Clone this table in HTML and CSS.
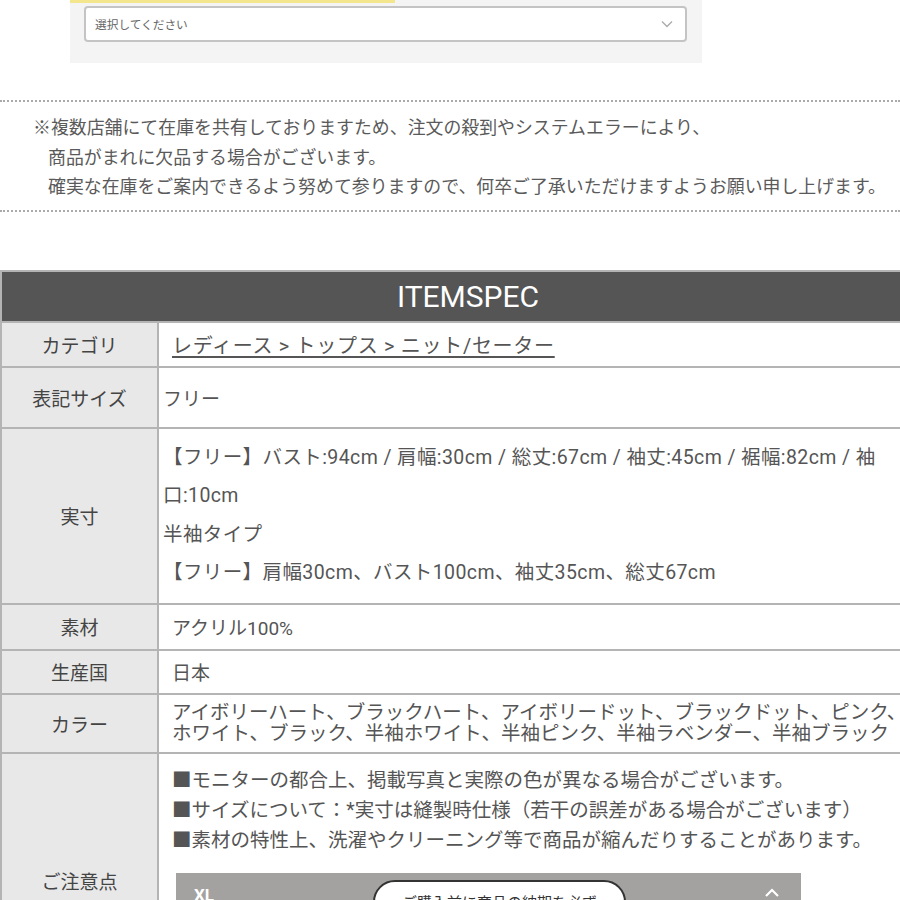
FILE: index.html
```html
<!DOCTYPE html>
<html lang="ja">
<head>
<meta charset="utf-8">
<title>ITEMSPEC</title>
<link rel="stylesheet" href="styles.css">
</head>
<body>
<div class="page">
  <div class="select-panel">
    <div class="yellow-bar"></div>
    <div class="select-box">
      <span class="select-text">選択してください</span>
      <svg class="chev" width="12" height="8" viewBox="0 0 12 8"><path d="M1 1.5 L6 6.5 L11 1.5" fill="none" stroke="#aaa" stroke-width="1.3"/></svg>
    </div>
  </div>

  <div class="notice">
    <div class="n-line">※複数店舗にて在庫を共有しておりますため、注文の殺到やシステムエラーにより、</div>
    <div class="n-line indent">商品がまれに欠品する場合がございます。</div>
    <div class="n-line indent">確実な在庫をご案内できるよう努めて参りますので、何卒ご了承いただけますようお願い申し上げます。</div>
  </div>

  <div class="spec">
    <div class="spec-head">ITEMSPEC</div>
    <div class="row r-cat">
      <div class="label">カテゴリ</div>
      <div class="val pad15"><a class="cat-link" href="#">レディース &gt; トップス &gt; ニット/セーター</a></div>
    </div>
    <div class="row r-size">
      <div class="label">表記サイズ</div>
      <div class="val pad5">フリー</div>
    </div>
    <div class="row r-dim">
      <div class="label">実寸</div>
      <div class="val pad5 dim">
        <div>【フリー】バスト:94cm / 肩幅:30cm / 総丈:67cm / 袖丈:45cm / 裾幅:82cm / 袖</div>
        <div>口:10cm</div>
        <div>半袖タイプ</div>
        <div>【フリー】肩幅30cm、バスト100cm、袖丈35cm、総丈67cm</div>
      </div>
    </div>
    <div class="row r-mat">
      <div class="label">素材</div>
      <div class="val pad15">アクリル100%</div>
    </div>
    <div class="row r-origin">
      <div class="label">生産国</div>
      <div class="val pad15">日本</div>
    </div>
    <div class="row r-color">
      <div class="label">カラー</div>
      <div class="val pad15 colors">
        <div>アイボリーハート、ブラックハート、アイボリードット、ブラックドット、ピンク、</div>
        <div>ホワイト、ブラック、半袖ホワイト、半袖ピンク、半袖ラベンダー、半袖ブラック</div>
      </div>
    </div>
    <div class="row r-note">
      <div class="label">ご注意点</div>
      <div class="val pad15 note">
        <div class="note-lines">
          <div>■モニターの都合上、掲載写真と実際の色が異なる場合がございます。</div>
          <div>■サイズについて：*実寸は縫製時仕様（若干の誤差がある場合がございます）</div>
          <div>■素材の特性上、洗濯やクリーニング等で商品が縮んだりすることがあります。</div>
        </div>
        <div class="shot">
          <span class="shot-xl">XL</span>
          <span class="shot-pill">ご購入前に商品の納期を必ず</span>
          <svg class="shot-up" width="16" height="10" viewBox="0 0 16 10"><path d="M2 9 L8 3 L14 9" fill="none" stroke="#fff" stroke-width="2.2"/></svg>
        </div>
      </div>
    </div>
  </div>
</div>
</body>
</html>
```

FILE: styles.css
```css
html, body {
  margin: 0;
  padding: 0;
  overflow: hidden;
  background: #fff;
}
.page {
  width: 900px;
  font-family: Roboto, "Noto Sans CJK JP", sans-serif;
  color: #555;
}
.select-panel {
  margin-left: 70px;
  width: 632px;
  height: 63px;
  background: #f4f4f4;
  box-sizing: border-box;
}
.yellow-bar {
  width: 325px;
  height: 3px;
  background: #f3e68c;
}
.select-box {
  margin: 3px 15px 0 14px;
  height: 36px;
  box-sizing: border-box;
  border: 2px solid #c4c4c4;
  border-radius: 4px;
  background: #fff;
  display: flex;
  align-items: center;
  justify-content: space-between;
  padding: 0 12px 0 9px;
}
.select-text {
  font-family: "Noto Sans CJK JP", sans-serif;
  font-size: 11.7px;
  color: #666;
  margin-top: -2px;
}
.notice {
  margin-top: 37px;
  border-top: 2px dotted #aaa;
  border-bottom: 2px dotted #aaa;
  padding: 10px 0 9px 33px;
  font-family: "Noto Sans CJK JP", sans-serif;
  font-size: 17.9px;
  line-height: 29.5px;
  color: #5a5a5a;
  white-space: nowrap;
}
.indent {
  margin-left: 15px;
}
.spec {
  margin-top: 58px;
  width: 936px;
  border: 2px solid #b4b4b4;
  border-bottom: 0;
  margin-left: 0;
  box-sizing: border-box;
}
.spec-head {
  height: 49px;
  background: #555;
  color: #fff;
  text-align: center;
  font-family: Roboto, sans-serif;
  font-size: 30px;
  line-height: 49px;
}
.row {
  display: grid;
  grid-template-columns: 157px 1fr;
  border-top: 2px solid #b4b4b4;
  box-sizing: border-box;
}
.label {
  background: #e8e8e8;
  border-right: 2px solid #b4b4b4;
  display: flex;
  align-items: center;
  justify-content: center;
  font-family: "Noto Sans CJK JP", sans-serif;
  font-size: 19px;
  color: #444;
}
.val {
  display: flex;
  flex-direction: column;
  justify-content: center;
  font-size: 19px;
  color: #555;
  white-space: nowrap;
}
.pad15 { padding-left: 13px; }
.pad5 { padding-left: 4px; }
.r-cat { height: 45px; }
.r-size { height: 61px; }
.r-dim { height: 176px; }
.r-mat { height: 46px; }
.r-origin { height: 44px; }
.r-color { height: 59px; }
.r-note { height: 256px; }
.cat-link {
  color: #555;
  font-size: 20px;
  letter-spacing: 0.7px;
  text-decoration: underline;
  text-underline-offset: 3px;
}
.dim {
  justify-content: flex-start;
  padding-top: 10px;
  font-size: 19.5px;
  letter-spacing: 0.4px;
  line-height: 38.5px;
}
.colors {
  line-height: 21px;
  font-size: 19.5px;
}
.note {
  justify-content: flex-start;
  padding-top: 12px;
  line-height: 30px;
  font-size: 19.5px;
}
.shot {
  margin-top: 17px;
  margin-left: 4px;
  width: 625px;
  height: 120px;
  background: #a3a2a0;
  position: relative;
}
.shot-xl {
  position: absolute;
  left: 18px;
  top: 12px;
  color: #fff;
  font-family: Roboto, sans-serif;
  font-weight: 700;
  font-size: 17px;
  line-height: 20px;
}
.shot-pill {
  position: absolute;
  left: 197px;
  top: 7px;
  width: 253px;
  height: 44px;
  box-sizing: border-box;
  border: 2px solid #333;
  border-radius: 22px;
  background: #fff;
  color: #333;
  font-family: "Noto Sans CJK JP", sans-serif;
  font-size: 15px;
  text-align: center;
  line-height: 40px;
}
.shot-up {
  position: absolute;
  left: 588px;
  top: 14px;
}
```
